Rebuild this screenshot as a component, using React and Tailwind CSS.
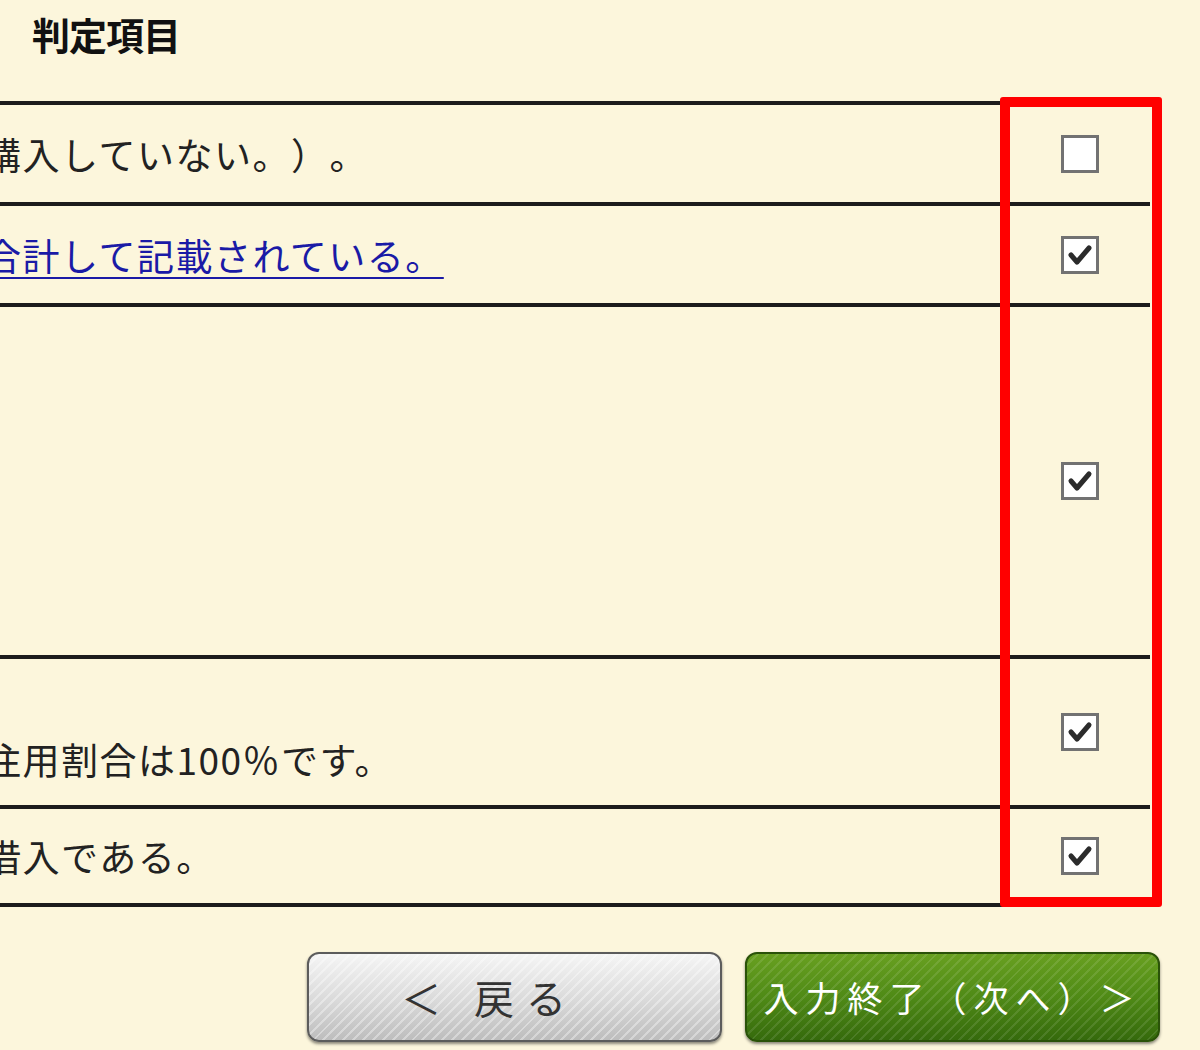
import React from 'react'

const FONT = { fontFamily: '"Noto Sans CJK JP", "Noto Sans", sans-serif' }

// 判定項目の行：左は説明文（左端で切れている）、右はチェック欄。高さは下罫線込み
const ROWS = [
  { h: 'h-[101px]', text: '購入していない。）。', checked: false, align: 'items-center' },
  { h: 'h-[101px]', text: '合計して記載されている。', checked: true, link: true, align: 'items-center' },
  { h: 'h-[352px]', text: '', checked: true, align: 'items-center' },
  { h: 'h-[150px]', text: '注用割合は100％です。', checked: true, align: 'items-end pb-[26px]' },
  { h: 'h-[98px]', text: '借入である。', checked: true, align: 'items-center' }
]

function CheckBox({ checked }) {
  return (
    <span className="flex h-[38px] w-[38px] items-center justify-center border-[3px] border-[#727272] bg-white">
      {checked && (
        <svg width="26" height="22" viewBox="0 0 26 22">
          <path d="M4 11 L10 18 L22 4" fill="none" stroke="#2b2b2b" strokeWidth="5" strokeLinecap="round" strokeLinejoin="round" />
        </svg>
      )}
    </span>
  )
}

export default function App() {
  return (
    <div className="min-h-[1050px] w-[1200px] overflow-hidden bg-[#fcf6dc] text-[#222]" style={FONT}>
      <div className="h-[101px] pl-[32px] pt-[10px] text-[38px] font-bold leading-[48px] tracking-[-1px] text-[#111]">判定項目</div>

      <div className="relative w-[1150px]">
        <div className="border-t-4 border-[#1c1c1c]">
          {ROWS.map((r, i) => (
            <div key={i} className={`flex ${r.h} border-b-4 border-[#1c1c1c]`}>
              <div className={`flex w-[1010px] overflow-hidden ${r.align}`}>
                {r.text && (
                  <span className={`-ml-[16px] whitespace-nowrap text-[37px] leading-[40px] tracking-[1.5px] [text-spacing-trim:space-all] ${r.link ? 'text-[#1a1aa6] underline decoration-2 underline-offset-[6px]' : ''}`}>
                    {r.text}
                  </span>
                )}
              </div>
              <div className="flex w-[140px] items-center justify-center">
                <CheckBox checked={r.checked} />
              </div>
            </div>
          ))}
        </div>
        {/* 赤枠の強調 */}
        <div className="pointer-events-none absolute left-[1000px] top-[-4px] h-[810px] w-[162px] rounded-[3px] border-[10px] border-[#ff0000]" />
      </div>

      <div className="flex justify-end gap-[23px] pr-[40px] pt-[45px]">
        <button className="flex h-[90px] w-[415px] items-center justify-center rounded-[12px] border-2 border-[#5c5c5c] bg-[image:repeating-linear-gradient(135deg,rgba(255,255,255,0.35)_0px,rgba(255,255,255,0.35)_2px,transparent_2px,transparent_7px),linear-gradient(#f5f5f5,#d9d9d9_55%,#bdbdbd)] pr-[50px] text-[40px] tracking-[12px] text-[#333] shadow-[0_2px_3px_rgba(0,0,0,0.45)]">
          ＜&nbsp;戻る
        </button>
        <button className="flex h-[90px] w-[415px] items-center justify-center rounded-[12px] border-2 border-[#2a5209] bg-[image:repeating-linear-gradient(135deg,rgba(255,255,255,0.1)_0px,rgba(255,255,255,0.1)_2px,transparent_2px,transparent_7px),linear-gradient(#68a020,#4f8a16_50%,#356a0c)] text-[35px] tracking-[7px] text-white shadow-[0_2px_3px_rgba(0,0,0,0.45)]">
          入力終了（次へ）＞
        </button>
      </div>
    </div>
  )
}
